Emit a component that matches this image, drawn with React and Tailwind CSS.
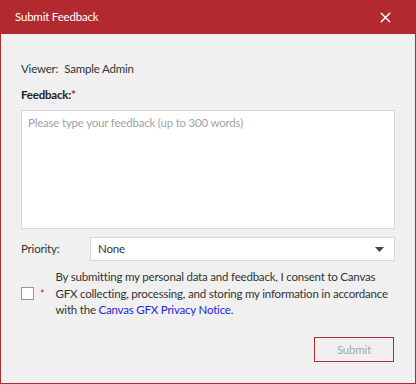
import { X } from "lucide-react"

export default function App() {
  return (
    <div className="w-[416px] h-[384px] flex flex-col bg-[#f0f0f0] border border-[#b22a30] border-t-0 text-[11.5px] tracking-[-0.2px] text-[#333] font-['Lato',sans-serif]">
      <div className="h-[34px] shrink-0 bg-[#b22a30] flex items-center justify-between pl-[15px] pr-[22px] -mx-px">
        <h1 className="text-white text-[11.5px]">Submit Feedback</h1>
        <X className="w-[17px] h-[17px] text-white" strokeWidth={2} />
      </div>

      <div className="flex-1 flex flex-col px-[20px]">
        <div className="mt-[26px] h-[18px] flex items-center">
          <span>Viewer:</span>
          <span className="ml-[6px]">Sample Admin</span>
        </div>

        <div className="mt-[8px] h-[18px] flex items-center font-bold text-[#222]">
          Feedback:<span className="text-[#c0282e]">*</span>
        </div>

        <textarea
          className="mt-[6px] h-[119px] w-[374px] resize-none bg-white border border-[#d3d6dd] px-[6px] py-[3px] text-[11.5px] placeholder:text-[#a3a3a3] outline-none"
          placeholder="Please type your feedback (up to 300 words)"
        />

        <div className="mt-[8px] flex items-center">
          <label className="w-[69px]">Priority:</label>
          <div className="w-[305px] h-[24px] bg-white border border-[#d3d6dd] flex items-center justify-between pl-[7px] pr-[10px]">
            <span>None</span>
            <svg width="9" height="5" viewBox="0 0 9 5">
              <path d="M0 0h9L4.5 5z" fill="#444" />
            </svg>
          </div>
        </div>

        <div className="mt-[8px] flex items-center">
          <div className="shrink-0 w-[13px] h-[13px] bg-white border border-[#999]" />
          <span className="shrink-0 ml-[6px] text-[#c0282e] text-[11px]">*</span>
          <p className="ml-[11px] w-[338px] leading-[16.5px]">
            By submitting my personal data and feedback, I consent to Canvas GFX collecting, processing, and storing my information in accordance with the{" "}
            <a className="text-[#2525e0]">Canvas GFX Privacy Notice</a>.
          </p>
        </div>

        <div className="mt-auto mb-[21px] flex justify-end">
          <button className="w-[80px] h-[25px] border border-[#b22a30] text-[#a8a8a8] text-[11.5px] mr-[1px]">
            Submit
          </button>
        </div>
      </div>
    </div>
  )
}
